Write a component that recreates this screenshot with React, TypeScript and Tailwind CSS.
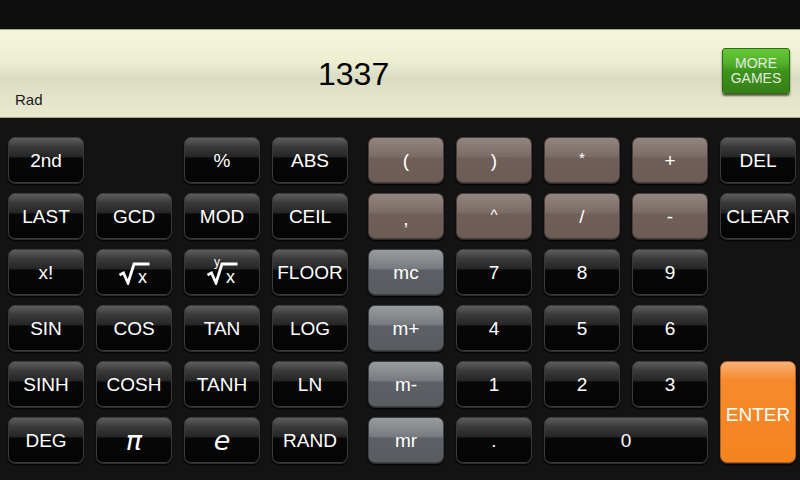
import React from "react";

type Tone = "black" | "brown" | "gray" | "orange";

const tones: Record<Tone, string> = {
  black:
    "bg-[linear-gradient(to_bottom,#5e5e5e_0%,#3a3a3a_20%,#262626_42%,#070707_46%,#040404_100%)] border-[#3b3b3b]",
  brown:
    "bg-[linear-gradient(to_bottom,#938680_0%,#85766f_25%,#7b6c65_42%,#6f5f58_46%,#6c5c55_100%)] border-[#4a3f3a]",
  gray:
    "bg-[linear-gradient(to_bottom,#999c9f_0%,#85898c_25%,#777b7f_42%,#5c6065_46%,#595d62_100%)] border-[#3e4145]",
  orange:
    "bg-[linear-gradient(to_bottom,#fab27a_0%,#f79a4c_10%,#f68a2c_18%,#f5841f_100%)] border-[#b85f16]",
};

const Key = ({
  label,
  tone = "black",
  className = "",
}: {
  label: React.ReactNode;
  tone?: Tone;
  className?: string;
}) => (
  <div
    className={`flex items-center justify-center rounded-[7px] border text-white text-[19px] leading-none shadow-[0_1px_0_#2e2e2e,0_2px_2px_#000] ${tones[tone]} ${className}`}
  >
    {label}
  </div>
);

// radical sign with the overline running over the x
const Radical = ({ small }: { small?: boolean }) => (
  <span className="relative inline-block w-[32px] h-[23px] mt-[2px]">
    <svg width="32" height="23" viewBox="0 0 32 23" className="absolute left-0 top-0">
      <path d="M1.5 13 L5.5 11 L10 21 L16 2 L31.5 2" fill="none" stroke="white" strokeWidth="2.8" strokeLinejoin="miter" />
    </svg>
    {small && (
      <span className="absolute left-[8px] top-[-6px] text-[12px] leading-none">y</span>
    )}
    <span className="absolute left-[20px] bottom-[-1px] text-[18px] leading-none">x</span>
  </span>
);

const leftKeys: (React.ReactNode | null)[] = [
  "2nd", null, "%", "ABS",
  "LAST", "GCD", "MOD", "CEIL",
  "x!", <Radical key="r1" />, <Radical key="r2" small />, "FLOOR",
  "SIN", "COS", "TAN", "LOG",
  "SINH", "COSH", "TANH", "LN",
  "DEG",
  <span key="pi" className="text-[27px] italic font-['DejaVu_Sans',sans-serif] leading-none">π</span>,
  <span key="e" className="text-[27px] italic leading-none font-['DejaVu_Sans',sans-serif]">e</span>,
  "RAND",
];

export default function App() {
  return (
    <div className="w-[800px] h-[480px] overflow-hidden bg-[#131313] font-['Liberation_Sans',Arial,sans-serif]">
      <div className="h-[29px] bg-[#0e0e0e]" />
      <div className="h-[89px] flex border-y border-[#a9a98f] bg-[linear-gradient(to_bottom,#f4f5da_0%,#eeefd2_35%,#dadcc1_55%,#e2e3c9_75%,#e8e9cf_100%)]">
        <div className="flex-1 flex flex-col pl-[15px]">
          <div className="pl-[303px] pt-[28px] text-[32px] leading-[32px] text-black">1337</div>
          <div className="mt-[2px] text-[15px] leading-[15px] text-[#1a1a1a]">Rad</div>
        </div>
        <div className="mt-[18px] mr-[10px] w-[68px] h-[46px] rounded-[3px] border border-[#2f6a12] bg-[linear-gradient(to_bottom,#66c838_0%,#4fae28_35%,#3c941b_50%,#367f17_100%)] shadow-[0_2px_2px_#5e5e4a] flex flex-col items-center justify-center text-[14px] leading-[15px] text-[#e4eae0]">
          <span>MORE</span>
          <span>GAMES</span>
        </div>
      </div>
      <div className="flex pt-[19px] px-[8px] gap-[20px]">
        <div className="grid grid-cols-[repeat(4,76px)] grid-rows-[repeat(6,46px)] gap-x-[12px] gap-y-[10px]">
          {leftKeys.map((k, i) => (k === null ? <div key={i} /> : <Key key={i} label={k} />))}
        </div>
        <div className="grid grid-cols-[repeat(5,76px)] grid-rows-[repeat(6,46px)] gap-x-[12px] gap-y-[10px]">
          <Key label="(" tone="brown" />
          <Key label=")" tone="brown" />
          <Key label={<span className="text-[15px] -mt-[6px]">*</span>} tone="brown" />
          <Key label="+" tone="brown" />
          <Key label="DEL" />
          <Key label={<span className="mt-[4px]">,</span>} tone="brown" />
          <Key label={<span className="text-[15px] -mt-[4px]">^</span>} tone="brown" />
          <Key label="/" tone="brown" />
          <Key label="-" tone="brown" />
          <Key label="CLEAR" />
          <Key label="mc" tone="gray" />
          <Key label="7" />
          <Key label="8" />
          <Key label="9" />
          <div />
          <Key label="m+" tone="gray" />
          <Key label="4" />
          <Key label="5" />
          <Key label="6" />
          <div />
          <Key label="m-" tone="gray" />
          <Key label="1" />
          <Key label="2" />
          <Key label="3" />
          <Key label={<span className="mt-[4px]">ENTER</span>} tone="orange" className="row-span-2" />
          <Key label="mr" tone="gray" />
          <Key label="." />
          <Key label="0" className="col-span-2" />
        </div>
      </div>
    </div>
  );
}
